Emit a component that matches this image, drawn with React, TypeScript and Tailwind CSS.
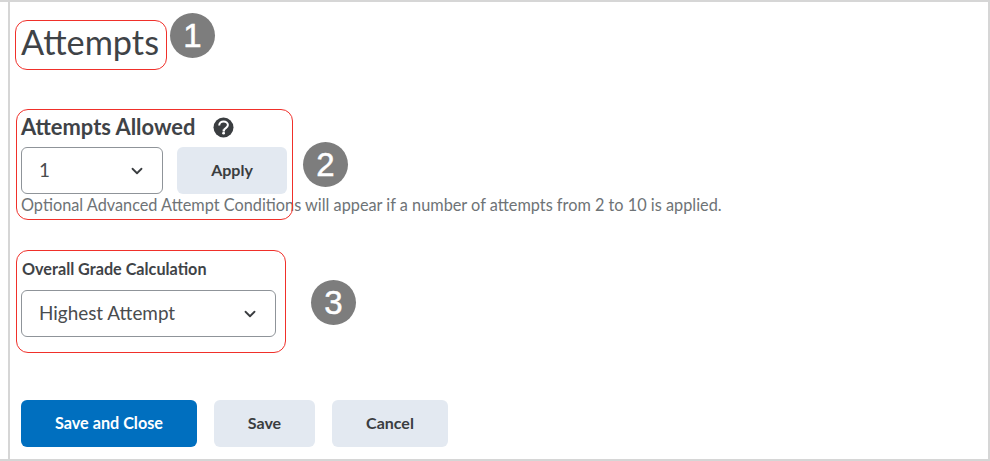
import { ChevronDown } from "lucide-react";
import type { ReactElement, ReactNode } from "react";

function Select({ value, width }: { value: string; width: string }): ReactElement {
  return (
    <div className={`flex h-[47px] ${width} items-center justify-between rounded-[6px] border-[1.5px] border-[#8f9499] bg-white pl-[17px] pr-[16px] text-[18.9px] text-[#494c4e]`}>
      <span>{value}</span>
      <ChevronDown size={18} strokeWidth={2.4} className="text-[#3a3d40]" aria-hidden="true" />
    </div>
  );
}

function Step({ className, children }: { className: string; children: ReactNode }): ReactElement {
  return (
    <div className={`absolute flex h-[45px] w-[45px] items-center justify-center rounded-full bg-[#7d7d7d] font-['Liberation_Sans',sans-serif] text-[33px] text-white [-webkit-text-stroke:0.5px_white] ${className}`}>
      {children}
    </div>
  );
}

function Outline({ className }: { className: string }): ReactElement {
  return <div className={`pointer-events-none absolute rounded-[12px] border-[1.5px] border-[#f0302a] ${className}`} />;
}

function HelpIcon(): ReactElement {
  return (
    <svg width="21" height="21" viewBox="0 0 21 21" aria-hidden="true">
      <circle cx="10.5" cy="10.5" r="10" fill="#3a3d40" />
      <path d="M6.2 8.4c0-2.5 2-4 4.4-4s4.3 1.5 4.3 3.7c0 3-3.9 2.9-3.9 5.4h-1.4" fill="none" stroke="#fff" strokeWidth="2" />
      <circle cx="10.6" cy="16.2" r="1.4" fill="#fff" />
    </svg>
  );
}

export default function App(): ReactElement {
  return (
    <div className="relative h-[461px] w-[990px] overflow-hidden border-y-2 border-r-2 border-[#d6d6d6] bg-white font-['Lato',sans-serif]">
      <div className="ml-[8px] h-full border-l-2 border-[#d6d6d6] pl-[11px]">
        <h1 className="pt-[18px] text-[34.3px] leading-[44px] font-normal text-[#3f4347]">Attempts</h1>

        <div className="mt-[50px] flex items-center gap-[18px]">
          <h2 className="text-[21.9px] leading-[26px] font-bold text-[#3f4347]">Attempts Allowed</h2>
          <HelpIcon />
        </div>
        <div className="mt-[7px] flex gap-[14px]">
          <Select value="1" width="w-[142px]" />
          <button className="h-[47px] w-[110px] rounded-[6px] bg-[#e3e9f1] pb-[2px] text-[16px] font-bold text-[#3a3d40]">Apply</button>
        </div>
        <p className="mt-[1px] text-[16.3px] leading-[20px] text-[#6e7376]">
          Optional Advanced Attempt Conditions will appear if a number of attempts from 2 to 10 is applied.
        </p>

        <label className="mt-[44px] block pl-[1px] text-[16.2px] leading-[20px] font-bold text-[#3f4347]">Overall Grade Calculation</label>
        <div className="mt-[11px]">
          <Select value="Highest Attempt" width="w-[255px]" />
        </div>

        <div className="mt-[63px] flex gap-[17px]">
          <button className="h-[47px] w-[176px] rounded-[6px] bg-[#006fbf] text-[16.2px] font-bold text-white">Save and Close</button>
          <button className="h-[47px] w-[101px] rounded-[6px] bg-[#e3e9f1] pb-[2px] text-[16px] font-bold text-[#3a3d40]">Save</button>
          <button className="h-[47px] w-[116px] rounded-[6px] bg-[#e3e9f1] pb-[2px] text-[16px] font-bold text-[#3a3d40]">Cancel</button>
        </div>
      </div>

      <Outline className="top-[18px] left-[15px] h-[50px] w-[152px]" />
      <Outline className="top-[107px] left-[16px] h-[111px] w-[277px]" />
      <Outline className="top-[248px] left-[16px] h-[103px] w-[270px]" />

      <Step className="top-[11px] left-[170px]">1</Step>
      <Step className="top-[140px] left-[303px]">2</Step>
      <Step className="top-[278px] left-[311px]">3</Step>
    </div>
  );
}
